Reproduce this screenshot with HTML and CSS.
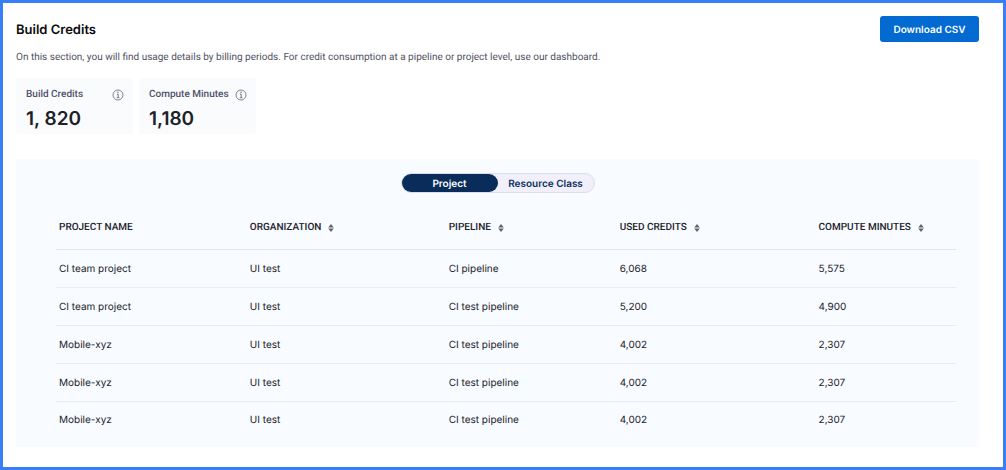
FILE: index.html
```
<!DOCTYPE html>
<html lang="en">
<head>
<meta charset="utf-8">
<title>Build Credits</title>
<link rel="stylesheet" href="styles.css">
</head>
<body>
<svg class="symbols" aria-hidden="true">
  <symbol id="info" viewBox="0 0 12 12">
    <circle cx="6" cy="6" r="5" fill="none" stroke="currentColor" stroke-width=".8"/>
    <path d="M5 5.2h1.2v3.3M4.8 8.7h2.6" fill="none" stroke="currentColor" stroke-width=".9"/>
    <circle cx="6" cy="3.3" r=".7" fill="currentColor"/>
  </symbol>
  <symbol id="sort" viewBox="0 0 6 8">
    <path d="M3 0 5.8 3.4H.2zM3 8 .2 4.6h5.6z" fill="currentColor"/>
  </symbol>
</svg>
<main class="page">
  <header class="header">
    <div class="intro">
      <h1 class="title">Build Credits</h1>
      <p class="description">On this section, you will find usage details by billing periods. For credit consumption at a pipeline or project level, use our dashboard.</p>
    </div>
    <button class="download" type="button">Download CSV</button>
  </header>

  <section class="stats" aria-label="Usage totals">
    <div class="stat">
      <div class="stat-label">Build Credits <svg class="info"><use href="#info"/></svg></div>
      <div class="stat-value">1, 820</div>
    </div>
    <div class="stat">
      <div class="stat-label">Compute Minutes <svg class="info"><use href="#info"/></svg></div>
      <div class="stat-value">1,180</div>
    </div>
  </section>

  <section class="panel" aria-label="Usage details">
    <div class="toggle">
      <button class="toggle-option toggle-active" type="button" aria-pressed="true">Project</button>
      <button class="toggle-option" type="button" aria-pressed="false">Resource Class</button>
    </div>
    <div class="usage-area">
      <table class="usage">
        <colgroup>
          <col class="col-project"><col class="col-organization"><col class="col-pipeline"><col class="col-credits"><col class="col-minutes">
        </colgroup>
        <thead>
          <tr>
            <th>PROJECT NAME</th>
            <th><button class="sort-button" type="button">ORGANIZATION <svg class="sort"><use href="#sort"/></svg></button></th>
            <th><button class="sort-button" type="button">PIPELINE <svg class="sort"><use href="#sort"/></svg></button></th>
            <th><button class="sort-button" type="button">USED CREDITS <svg class="sort"><use href="#sort"/></svg></button></th>
            <th><button class="sort-button" type="button">COMPUTE MINUTES <svg class="sort"><use href="#sort"/></svg></button></th>
          </tr>
        </thead>
        <tbody>
          <tr><td>CI team project</td><td>UI test</td><td>CI pipeline</td><td>6,068</td><td>5,575</td></tr>
          <tr><td>CI team project</td><td>UI test</td><td>CI test pipeline</td><td>5,200</td><td>4,900</td></tr>
          <tr><td>Mobile-xyz</td><td>UI test</td><td>CI test pipeline</td><td>4,002</td><td>2,307</td></tr>
          <tr><td>Mobile-xyz</td><td>UI test</td><td>CI test pipeline</td><td>4,002</td><td>2,307</td></tr>
          <tr><td>Mobile-xyz</td><td>UI test</td><td>CI test pipeline</td><td>4,002</td><td>2,307</td></tr>
        </tbody>
      </table>
    </div>
  </section>
</main>
</body>
</html>
```
FILE: styles.css
```
* { box-sizing: border-box; }

body {
  margin: 0;
  background: #fff;
  color: #22222a;
  font: 10px/16px Inter, "Liberation Sans", sans-serif;
  text-rendering: geometricPrecision;
}

button {
  padding: 0;
  border: 0;
  background: none;
  color: inherit;
  font: inherit;
  text-rendering: inherit;
  cursor: pointer;
}

.symbols { position: absolute; width: 0; height: 0; }

.page {
  min-height: 100vh;
  padding: 13px 24px 20px 13px;
  border: 3px solid #387ff5;
}

.header {
  display: flex;
  justify-content: space-between;
  align-items: flex-start;
}

.title {
  margin: 4px 0 10px;
  color: #0b0b0d;
  font-size: 13px;
  font-weight: 600;
  line-height: 20px;
}

.description {
  margin: 0;
  color: #4f5162;
  font-family: Roboto, "Liberation Sans", sans-serif;
}

.download {
  flex: none;
  min-width: 99px;
  padding: 6px 12px 4px;
  border-radius: 3px;
  background: #026ad1;
  color: #fff;
  font-weight: 600;
}

.stats {
  display: flex;
  gap: 6px;
  margin-top: 12px;
}

.stat {
  width: 117px;
  padding: 8px 9px 3px 10px;
  border-radius: 3px;
  background: #fafbfd;
}

.stat-label {
  display: flex;
  justify-content: space-between;
  align-items: center;
  color: #4f5068;
  font-family: Roboto, "Liberation Sans", sans-serif;
  font-weight: 500;
  line-height: 17px;
  white-space: nowrap;
}

.info { flex: none; width: 12px; height: 12px; color: #626378; }

.stat-value {
  margin-top: 4px;
  color: #202126;
  font-size: 19px;
  font-weight: 600;
  line-height: 24px;
}

.panel {
  margin-top: 25px;
  padding: 14px 0 8px;
  background: #f8fbff;
}

.toggle {
  display: flex;
  width: 194px;
  margin: 0 auto;
  border: 1px solid #dddde8;
  border-radius: 11px;
  background: #f1f0fa;
}

.toggle-option {
  flex: 1;
  height: 18px;
  padding-top: 1px;
  border-radius: 10px;
  color: #0b2f61;
  font-weight: 600;
  white-space: nowrap;
}

.toggle-active { background: #0a2c5b; color: #fff; }

.usage-area { padding: 13px 23px 0 40px; }

.usage {
  width: 100%;
  border-collapse: collapse;
  table-layout: fixed;
}

.col-project { width: 21.2%; }
.col-organization { width: 22.1%; }
.col-pipeline { width: 19%; }
.col-credits { width: 22.1%; }
.col-minutes { width: 15.6%; }

.usage th,
.usage td {
  height: 38px;
  padding: 2px 0 0 3px;
  text-align: left;
  font-weight: 400;
  white-space: nowrap;
}

.usage th {
  height: 43px;
  border-bottom: 1px solid #e3e5ea;
  font-family: Roboto, "Liberation Sans", sans-serif;
  font-weight: 500;
}

.usage td { border-bottom: 1px solid #e9ebf0; }
.usage tbody tr:last-child td { border-bottom: 0; padding-top: 0; }

.sort-button { display: flex; align-items: center; gap: 7px; }
.sort { width: 6px; height: 8px; color: #62646b; }
```
